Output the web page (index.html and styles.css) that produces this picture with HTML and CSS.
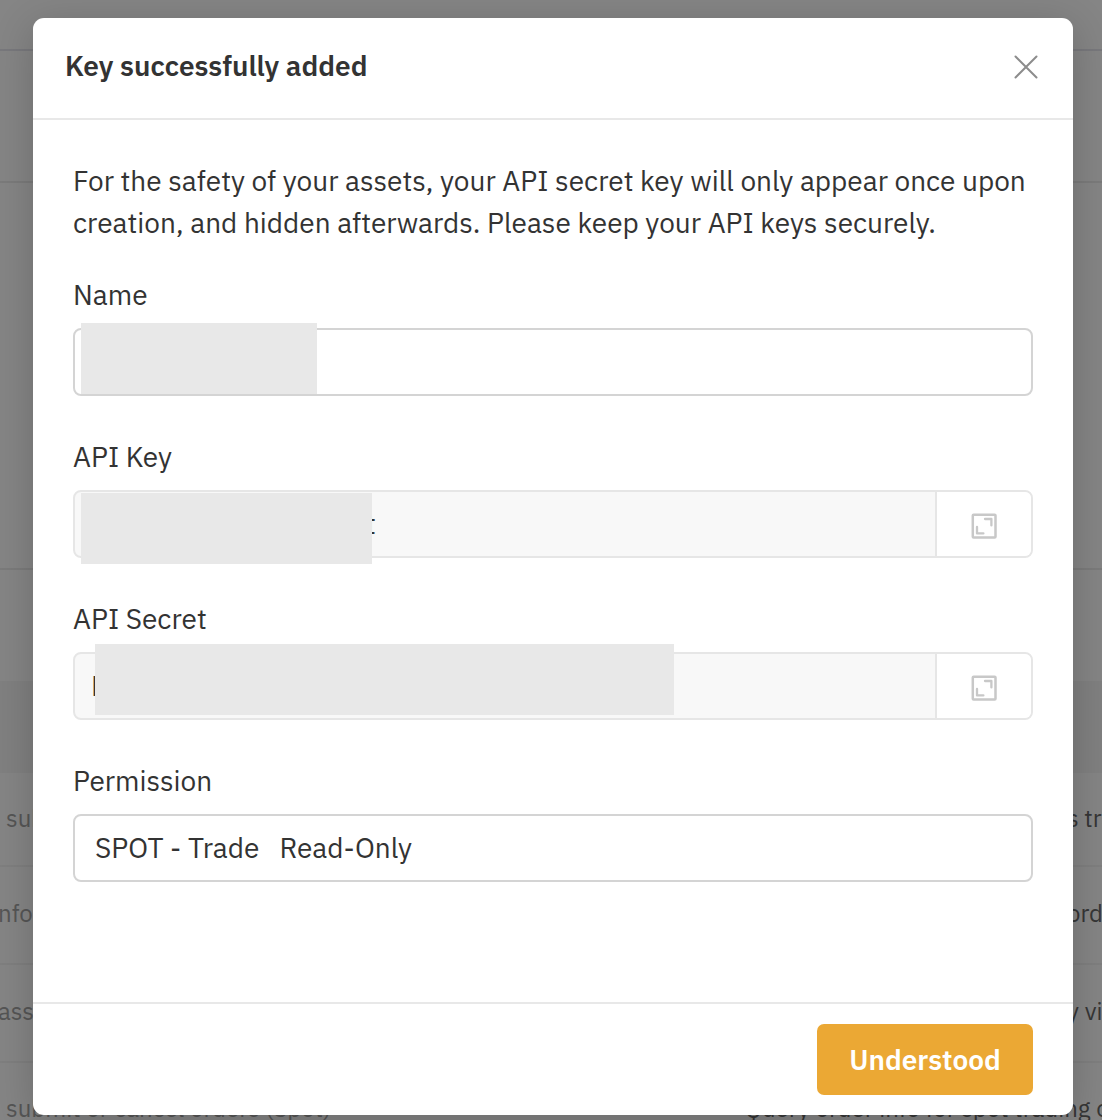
FILE: index.html
```html
<!DOCTYPE html>
<html lang="en">
<head>
    <meta charset="UTF-8">
    <meta name="viewport" content="width=device-width, initial-scale=1.0">
    <title>API Management</title>
    <link rel="stylesheet" href="styles.css">
</head>
<body>

    <!-- Page behind the dialog -->
    <div class="page">
        <div class="topbar"></div>
        <div class="page-title"></div>
        <div class="page-form"></div>
        <div class="table-space"></div>
        <div class="table-head"></div>
        <div class="row row-1">
            <span class="left">submit</span>
            <span class="right">s trades</span>
        </div>
        <div class="row row-2">
            <span class="left">nfo</span>
            <span class="right">orders</span>
        </div>
        <div class="row row-3">
            <span class="left">assets</span>
            <span class="right">y via</span>
        </div>
        <div class="row row-4">
            <span class="left">submit or cancel orders (Spot)</span>
            <span class="right">Query order info for spot trading orders</span>
        </div>
    </div>

    <div class="overlay">
        <div class="modal">
            <div class="modal-header">
                <h2>Key successfully added</h2>
                <button class="close" aria-label="Close">
                    <svg width="24" height="24" viewBox="0 0 24 24" fill="none" stroke="#8c8c8c" stroke-width="2" stroke-linecap="round">
                        <path d="M1.5 1.5L22.5 22.5M22.5 1.5L1.5 22.5"/>
                    </svg>
                </button>
            </div>

            <div class="modal-body">
                <p class="notice">For the safety of your assets, your API secret key will only appear once upon<br>creation, and hidden afterwards. Please keep your API keys securely.</p>

                <div class="field">
                    <label>Name</label>
                    <div class="input">
                        <span class="mask mask-name"></span>
                    </div>
                </div>

                <div class="field">
                    <label>API Key</label>
                    <div class="input disabled">
                        <span class="value value-key">t</span>
                        <button class="expand" aria-label="Expand">
                            <svg width="26" height="26" viewBox="0 0 26 26" fill="none" stroke="#c8c8c8" stroke-width="2.3" stroke-linecap="round" stroke-linejoin="round">
                                <rect x="1.8" y="1.8" width="22.7" height="22.7" rx="0.8" stroke-width="2.5"/>
                                <path d="M14 6H20.4V12.4M6 14V20.4H12.4"/>
                            </svg>
                        </button>
                        <span class="mask mask-key"></span>
                    </div>
                </div>

                <div class="field">
                    <label>API Secret</label>
                    <div class="input disabled">
                        <span class="value value-secret">L</span>
                        <button class="expand" aria-label="Expand">
                            <svg width="26" height="26" viewBox="0 0 26 26" fill="none" stroke="#c8c8c8" stroke-width="2.3" stroke-linecap="round" stroke-linejoin="round">
                                <rect x="1.8" y="1.8" width="22.7" height="22.7" rx="0.8" stroke-width="2.5"/>
                                <path d="M14 6H20.4V12.4M6 14V20.4H12.4"/>
                            </svg>
                        </button>
                        <span class="mask mask-secret"></span>
                    </div>
                </div>

                <div class="field">
                    <label>Permission</label>
                    <div class="input permissions">
                        <span>SPOT - Trade</span>
                        <span>Read-Only</span>
                    </div>
                </div>
            </div>

            <div class="modal-footer">
                <button class="confirm">Understood</button>
            </div>
        </div>
    </div>

</body>
</html>
```
FILE: styles.css
```css
* {
    box-sizing: border-box;
}
body {
    margin: 0;
    height: 1120px;
    overflow: hidden;
    position: relative;
    background: #fff;
    color: #333;
    font-family: "IBM Plex Sans", Roboto, "Liberation Sans", sans-serif;
    font-size: 28px;
}
button {
    padding: 0;
    border: none;
    background: none;
    font-family: inherit;
}

/* page behind the dialog */
.page {
    height: 1120px;
    overflow: hidden;
    background: #fff;
    font-size: 24px;
}
.topbar {
    height: 51px;
    border-bottom: 2px solid #e6e6ee;
}
.page-title {
    height: 132px;
    border-bottom: 2px solid #ebebeb;
}
.page-form {
    height: 387px;
    border-bottom: 2px solid #ebebeb;
}
.table-space {
    height: 111px;
}
.table-head {
    height: 92px;
    background: #f5f5f5;
}
.row {
    display: grid;
    grid-template-columns: 739px 1fr;
    align-items: center;
    height: 98px;
    padding: 0 0 4px 6px;
    border-bottom: 2px solid #f3f3f3;
    white-space: nowrap;
}
.row .left {
    color: #a4a4a4;
}
.row .right {
    padding-left: 322px;
    color: #686868;
}
.row-1 {
    height: 94px;
    padding-bottom: 2px;
}
.row-2, .row-3 {
    padding-left: 0;
    grid-template-columns: 745px 1fr;
}
.row-2 .left, .row-3 .left {
    margin-left: -2px;
}
.row-4 {
    padding-bottom: 6px;
}
.row-4 .right {
    padding-left: 0;
}

/* dialog */
.overlay {
    position: absolute;
    top: 0;
    left: 0;
    width: 1102px;
    height: 1120px;
    padding: 18px 29px 5px 33px;
    background: rgba(0, 0, 0, 0.48);
}
.modal {
    display: flex;
    flex-direction: column;
    height: 1097px;
    background: #fff;
    border-radius: 11px;
    box-shadow: 0 8px 40px rgba(0, 0, 0, 0.2);
}
.modal-header {
    display: flex;
    justify-content: space-between;
    align-items: center;
    height: 102px;
    padding: 0 35px 4px 32px;
    border-bottom: 2px solid #e8e8e8;
}
.modal-header h2 {
    margin: 0;
    font-size: 28px;
    font-weight: 600;
    line-height: 40px;
}
.close {
    width: 24px;
    height: 24px;
    margin-top: 2px;
}
.close svg, .expand svg {
    display: block;
}
.modal-body {
    flex: 1;
    padding: 40px 40px 0;
}
.notice {
    margin: 0 0 30px;
    line-height: 42px;
    white-space: nowrap;
}
.field {
    height: 162px;
}
.field label {
    display: block;
    line-height: 42px;
    margin-bottom: 12px;
}
.input {
    position: relative;
    display: flex;
    align-items: center;
    height: 68px;
    border: 2px solid #d4d4d4;
    border-radius: 8px;
    background: #fff;
}
.input.disabled {
    background: #f8f8f8;
    border-color: #e6e6e6;
}
.value {
    flex: 1;
    padding-bottom: 1px;
}
.value-key {
    padding-left: 291px;
}
.value-secret {
    padding-left: 16px;
}
.expand {
    display: flex;
    align-items: center;
    justify-content: center;
    width: 96px;
    height: 100%;
    padding-top: 3px;
    border-left: 2px solid #e6e6e6;
    border-radius: 0 6px 6px 0;
    background: #fff;
}
.permissions {
    gap: 20px;
    padding: 0 0 2px 20px;
}

/* redacted values */
.mask {
    position: absolute;
    background: #e8e8e8;
}
.mask-name {
    top: -7px;
    left: 6px;
    width: 236px;
    height: 71px;
}
.mask-key {
    top: 1px;
    left: 6px;
    width: 291px;
    height: 71px;
}
.mask-secret {
    top: -10px;
    left: 20px;
    width: 579px;
    height: 71px;
}

.modal-footer {
    display: flex;
    justify-content: flex-end;
    height: 113px;
    padding: 20px 40px;
    border-top: 2px solid #e8e8e8;
}
.confirm {
    width: 216px;
    height: 71px;
    border-radius: 7px;
    background: #eba834;
    color: #fff;
    font-size: 28px;
    font-weight: 600;
}
```
